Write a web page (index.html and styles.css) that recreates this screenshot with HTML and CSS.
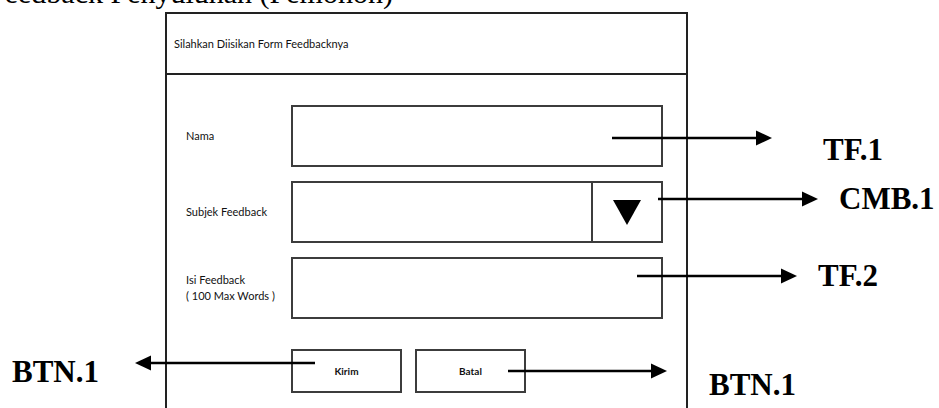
FILE: index.html
```html
<!DOCTYPE html>
<html lang="id">
<head>
    <meta charset="UTF-8">
    <meta name="viewport" content="width=device-width, initial-scale=1.0">
    <title>Feedback Penyuluhan (Pemohon)</title>
    <link rel="stylesheet" href="styles.css">
</head>
<body>
<div class="page">

    <div class="doc-title">Feedback Penyuluhan (Pemohon)</div>

    <div class="mockup">
        <div class="mockup-head">Silahkan Diisikan Form Feedbacknya</div>
        <div class="mockup-body">
            <div class="row">
                <span class="label">Nama</span>
                <div class="field"></div>
            </div>
            <div class="row">
                <span class="label">Subjek Feedback</span>
                <div class="field combo">
                    <span class="combo-btn">
                        <svg width="28" height="25" viewBox="0 0 28 25"><polygon points="0,0 28,0 14,25" fill="#000"/></svg>
                    </span>
                </div>
            </div>
            <div class="row">
                <span class="label">Isi Feedback<br>( 100 Max Words )</span>
                <div class="field"></div>
            </div>
            <div class="actions">
                <div class="btn">Kirim</div>
                <div class="btn">Batal</div>
            </div>
        </div>
    </div>

    <!-- annotation arrows -->
    <svg class="arrows" width="939" height="408" viewBox="0 0 939 408">
        <g stroke="#000" stroke-width="2.5">
            <line x1="612" y1="138" x2="758" y2="138"/>
            <line x1="658" y1="199" x2="804" y2="199"/>
            <line x1="637" y1="276" x2="783" y2="276"/>
            <line x1="315" y1="363" x2="149" y2="363"/>
            <line x1="508" y1="371" x2="653" y2="371"/>
        </g>
        <g fill="#000">
            <polygon points="756,130.5 772,138 756,145.5"/>
            <polygon points="802,191.5 818,199 802,206.5"/>
            <polygon points="781,268.5 797,276 781,283.5"/>
            <polygon points="151,355.5 135,363 151,370.5"/>
            <polygon points="651,363.5 667,371 651,378.5"/>
        </g>
    </svg>

    <span class="tag tag-tf1">TF.1</span>
    <span class="tag tag-cmb1">CMB.1</span>
    <span class="tag tag-tf2">TF.2</span>
    <span class="tag tag-btn-left">BTN.1</span>
    <span class="tag tag-btn-right">BTN.1</span>

</div>
</body>
</html>
```

FILE: styles.css
```css
body {
    margin: 0;
    background-color: #fff;
}
.page {
    position: relative;
    width: 939px;
    height: 408px;
    overflow: hidden;
}
.doc-title {
    font-family: "Liberation Serif", serif;
    font-size: 30px;
    line-height: 30px;
    height: 30px;
    margin: -22px 0 0 -12px;
    white-space: nowrap;
    color: #000;
}
.mockup {
    margin: 4px 0 0 165px;
    width: 523px;
    height: 420px;
    box-sizing: border-box;
    border: 2px solid #222;
    border-bottom: none;
    font-family: Lato, "Liberation Sans", sans-serif;
    font-size: 11px;
    color: #111;
}
.mockup-head {
    height: 59px;
    border-bottom: 2px solid #222;
    display: flex;
    align-items: center;
    padding-left: 7px;
}
.mockup-body {
    padding: 30px 0 0 19px;
    display: flex;
    flex-direction: column;
    gap: 14px;
}
.row {
    display: grid;
    grid-template-columns: 105px 372px;
    align-items: center;
}
.label {
    line-height: 16px;
}
.field {
    height: 62px;
    box-sizing: border-box;
    border: 2px solid #3c3c3c;
}
.combo {
    display: flex;
    justify-content: flex-end;
}
.combo-btn {
    width: 70px;
    box-sizing: border-box;
    border-left: 2px solid #3c3c3c;
    display: flex;
    align-items: center;
    justify-content: center;
}
.actions {
    display: flex;
    gap: 13px;
    margin: 16px 0 0 105px;
}
.btn {
    width: 111px;
    height: 44px;
    box-sizing: border-box;
    border: 2px solid #3c3c3c;
    display: flex;
    align-items: center;
    justify-content: center;
    font-weight: bold;
    font-size: 10px;
}
.arrows {
    position: absolute;
    left: 0;
    top: 0;
}
.tag {
    position: absolute;
    font-family: "Liberation Serif", serif;
    font-weight: bold;
    font-size: 31px;
    line-height: 31px;
    color: #000;
    white-space: nowrap;
}
.tag-tf1 { left: 823px; top: 134px; }
.tag-cmb1 { left: 839px; top: 183px; }
.tag-tf2 { left: 818px; top: 260px; }
.tag-btn-left { left: 12px; top: 356px; }
.tag-btn-right { left: 709px; top: 369px; }
```
